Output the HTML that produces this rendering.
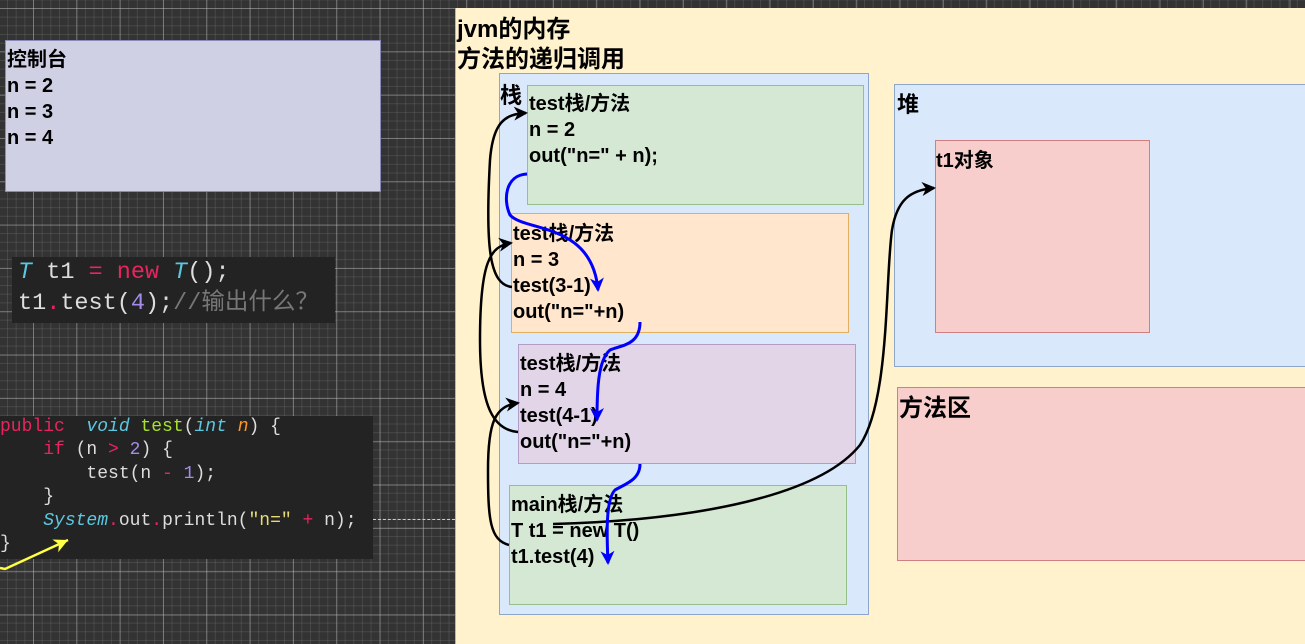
<!DOCTYPE html>
<html><head><meta charset="utf-8"><style>
*{margin:0;padding:0;box-sizing:border-box}
body{width:1305px;height:644px;overflow:hidden;position:relative;background-color:#333;
background-image:
linear-gradient(90deg,rgba(200,200,200,.4) 1px,transparent 1px),
linear-gradient(0deg,rgba(200,200,200,.4) 1px,transparent 1px),
linear-gradient(90deg,rgba(110,110,110,.35) 1px,transparent 1px),
linear-gradient(0deg,rgba(110,110,110,.35) 1px,transparent 1px);
background-size:43.33px 43.33px,43.33px 43.33px,8.667px 8.667px,8.667px 8.667px;
background-position:33px 9px,33px 9px,33px 9px,33px 9px;
font-family:"Liberation Sans","Noto Sans CJK SC",sans-serif;}
.b{position:absolute;border:1px solid}
.t{font-weight:bold;font-size:20px;line-height:26px;color:#000;white-space:pre}
.code{position:absolute;background:#232323;font-family:"Liberation Mono","Noto Sans CJK SC",monospace;white-space:pre;color:#ddd}
</style></head><body>
<div class="b" style="left:5px;top:40px;width:376px;height:152px;background:#d0d0e4;border-color:#8a8ab8"></div>
<div class="t" style="position:absolute;left:7px;top:47px">控制台
n = 2
n = 3
n = 4</div>
<div class="code" style="left:12px;top:257px;width:323px;height:66px;font-size:23.5px;line-height:31px;padding:0 0 0 6px"><span style="color:#5bc8e0;font-style:italic">T</span> t1 <span style="color:#e8245f">=</span> <span style="color:#e8245f">new</span> <span style="color:#5bc8e0;font-style:italic">T</span>();
t1<span style="color:#e8245f">.</span>test(<span style="color:#a58bea">4</span>);<span style="color:#777">//输出什么？</span></div>
<div class="code" style="left:0;top:416px;width:373px;height:143px;font-size:18px;line-height:23.4px"><span style="color:#e8245f">public</span>  <span style="color:#5bc8e0;font-style:italic">void</span> <span style="color:#a6e22e">test</span>(<span style="color:#5bc8e0;font-style:italic">int</span> <span style="color:#fd971f;font-style:italic">n</span>) {
    <span style="color:#e8245f">if</span> (n <span style="color:#e8245f">&gt;</span> <span style="color:#a58bea">2</span>) {
        test(n <span style="color:#e8245f">-</span> <span style="color:#a58bea">1</span>);
    }
    <span style="color:#5bc8e0;font-style:italic">System</span><span style="color:#e8245f">.</span>out<span style="color:#e8245f">.</span>println(<span style="color:#e6db74">"n="</span> <span style="color:#e8245f">+</span> n);
}</div>
<div style="position:absolute;left:373px;top:519px;width:82px;border-top:1px dashed #ccc"></div>
<div style="position:absolute;left:455px;top:8px;width:850px;height:636px;background:#fff2cc;border-left:1px solid #d6b656"></div>
<div class="t" style="position:absolute;left:457px;top:15px;font-size:24px;line-height:30px">jvm的内存
方法的递归调用</div>
<div class="b" style="left:499px;top:73px;width:370px;height:542px;background:#dae8fc;border-color:#8ea6c8"></div>
<div class="t" style="position:absolute;left:500px;top:83px;font-size:22px">栈</div>
<div class="b" style="left:527px;top:85px;width:337px;height:120px;background:#d5e8d4;border-color:#95c08a"></div>
<div class="t" style="position:absolute;left:529px;top:91px">test栈/方法
n = 2
out("n=" + n);</div>
<div class="b" style="left:511px;top:213px;width:338px;height:120px;background:#ffe6cc;border-color:#e0b060"></div>
<div class="t" style="position:absolute;left:513px;top:221px">test栈/方法
n = 3
test(3-1)
out("n="+n)</div>
<div class="b" style="left:518px;top:344px;width:338px;height:120px;background:#e1d5e7;border-color:#b39cc8"></div>
<div class="t" style="position:absolute;left:520px;top:351px">test栈/方法
n = 4
test(4-1)
out("n="+n)</div>
<div class="b" style="left:509px;top:485px;width:338px;height:120px;background:#d5e8d4;border-color:#95c08a"></div>
<div class="t" style="position:absolute;left:511px;top:492px">main栈/方法
T t1 = new T()
t1.test(4)</div>
<div class="b" style="left:894px;top:84px;width:420px;height:283px;background:#dae8fc;border-color:#8ea6c8"></div>
<div class="t" style="position:absolute;left:897px;top:92px;font-size:22px">堆</div>
<div class="b" style="left:935px;top:140px;width:215px;height:193px;background:#f8cecc;border-color:#d08080"></div>
<div class="t" style="position:absolute;left:936px;top:148px;font-size:20px">t1对象</div>
<div class="b" style="left:897px;top:387px;width:420px;height:174px;background:#f8cecc;border-color:#d08080"></div>
<div class="t" style="position:absolute;left:899px;top:396px;font-size:24px">方法区</div>
<svg width="1305" height="644" style="position:absolute;left:0;top:0">
<defs>
<marker id="ak" markerWidth="14" markerHeight="14" refX="12" refY="7" orient="auto" markerUnits="userSpaceOnUse"><path d="M0,0 L14,7 L0,14 L4,7z" fill="#000"/></marker>
<marker id="ab" markerWidth="14" markerHeight="16" refX="12" refY="7" orient="auto" markerUnits="userSpaceOnUse"><path d="M0,0 L14,7 L0,14 L4,7z" fill="#00f"/></marker>
<marker id="ay" markerWidth="16" markerHeight="16" refX="14" refY="7" orient="auto" markerUnits="userSpaceOnUse"><path d="M0,0 L14,7 L0,14 L4,7z" fill="#ff4"/></marker>
</defs>
<g fill="none" stroke="#000" stroke-width="2.5">
<path d="M512,287 C490,285 485,250 490,160 C493,122 505,114 526,113" marker-end="url(#ak)"/>
<path d="M518,432 C495,430 480,410 480,340 C480,262 490,246 511,243" marker-end="url(#ak)"/>
<path d="M509,545 C490,540 488,520 488,470 C488,422 495,406 518,403" marker-end="url(#ak)"/>
<path d="M553,524 C700,520 820,495 860,445 C890,400 885,280 892,230 C897,200 910,190 934,188" marker-end="url(#ak)"/>
</g>
<g fill="none" stroke="#00f" stroke-width="3">
<path d="M527,174 C505,175 503,200 510,215 C525,232 592,222 598,290" marker-end="url(#ab)"/>
<path d="M640,322 C640,345 622,345 610,350 C598,360 597,390 597,420" marker-end="url(#ab)"/>
<path d="M640,464 C640,480 625,484 615,490 C605,500 607,540 608,563" marker-end="url(#ab)"/>
</g>
<path d="M0,568 L5,569 L68,540" fill="none" stroke="#ff4" stroke-width="2.5" marker-end="url(#ay)"/>
</svg>
</body></html>
